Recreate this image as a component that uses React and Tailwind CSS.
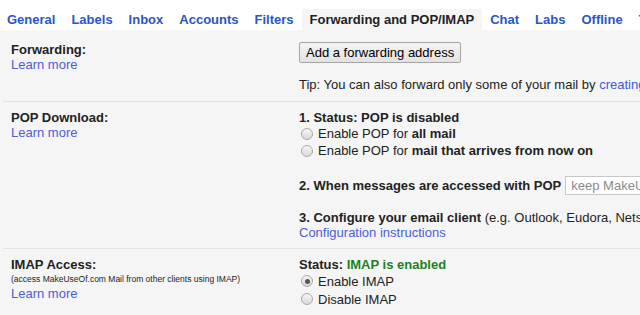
import React from 'react';

const tabs = ['General', 'Labels', 'Inbox', 'Accounts', 'Filters', 'Forwarding and POP/IMAP', 'Chat', 'Labs', 'Offline', 'Themes'];

const Radio = ({ checked }) => (
  <span className="inline-flex items-center justify-center w-3 h-3 ml-[2px] mr-[5px] rounded-full border border-[#a9a9a9] bg-gradient-to-b from-[#f6f6f6] to-[#d9d9d9] shrink-0">
    {checked && <span className="w-[5px] h-[5px] rounded-full bg-[#555]" />}
  </span>
);

const Section = ({ left, children, first }) => (
  <div className={first ? 'flex ml-[3px] pt-[12px] pb-[9px]' : 'flex ml-[3px] border-t border-[#e3e3e3] pt-[8px] pb-[8px]'}>
    <div className="w-[296px] shrink-0 pl-[8px]">{left}</div>
    <div className="flex-1 min-w-0">{children}</div>
  </div>
);

const App = () => {
  return (
    <div className="w-[640px] h-[315px] overflow-hidden whitespace-nowrap bg-[#f5f5f5] text-[13px] leading-[15px] text-[#222]" style={{ fontFamily: '"Liberation Sans", Arial, sans-serif' }}>
      {/* tab strip */}
      <div className="flex bg-white pt-[9px] -ml-px">
        {tabs.map((t) => {
          const active = t === 'Forwarding and POP/IMAP';
          return (
            <div
              key={t}
              className={active ? 'px-2 pt-[3px] pb-[3px] font-bold bg-[#f5f5f5] text-[#222]' : 'px-2 pt-[3px] pb-[3px] font-bold text-[#2a56c6]'}
            >
              {t}
            </div>
          );
        })}
      </div>

      {/* Forwarding */}
      <Section
        first
        left={
          <>
            <div className="font-bold">Forwarding:</div>
            <div className="text-[#4f5bd5]">Learn more</div>
          </>
        }
      >
        <div className="h-[21px] inline-flex items-center px-[6px] border border-[#a6a6a6] rounded-[2px] bg-gradient-to-b from-[#f4f4f4] to-[#e2e2e2] text-black">
          Add a forwarding address
        </div>
        <div className="mt-[14px]">
          Tip: You can also forward only some of your mail by <span className="text-[#3b5bd6]">creating a filter!</span>
        </div>
      </Section>

      {/* POP */}
      <Section
        left={
          <>
            <div className="font-bold">POP Download:</div>
            <div className="text-[#4f5bd5]">Learn more</div>
          </>
        }
      >
        <div className="font-bold">1. Status: POP is disabled</div>
        <div className="flex items-center h-[17px]">
          <Radio />
          <span>Enable POP for <b>all mail</b></span>
        </div>
        <div className="flex items-center h-[17px]">
          <Radio />
          <span>Enable POP for <b>mail that arrives from now on</b></span>
        </div>
        <div className="flex items-center h-[20px] mt-[16px]">
          <span className="font-bold">2. When messages are accessed with POP</span>
          <div className="ml-[4px] h-[19px] flex items-center px-[5px] border border-[#c8c8c8] bg-white text-[#8a8a8a]">
            keep MakeUseOf.com Mail's copy in the Inbox
          </div>
        </div>
        <div className="mt-[15px]">
          <b>3. Configure your email client</b> (e.g. Outlook, Eudora, Netscape Mail)
        </div>
        <div className="text-[#4f5bd5]">Configuration instructions</div>
      </Section>

      {/* IMAP */}
      <Section
        left={
          <>
            <div className="font-bold">IMAP Access:</div>
            <div className="text-[8.5px] leading-[14px]">(access MakeUseOf.com Mail from other clients using IMAP)</div>
            <div className="text-[#4f5bd5]">Learn more</div>
          </>
        }
      >
        <div className="font-bold">
          Status: <span className="text-[#1f7f1f]">IMAP is enabled</span>
        </div>
        <div className="flex items-center h-[18px]">
          <Radio checked />
          <span>Enable IMAP</span>
        </div>
        <div className="flex items-center h-[18px]">
          <Radio />
          <span>Disable IMAP</span>
        </div>
      </Section>
    </div>
  );
};

export default App;
